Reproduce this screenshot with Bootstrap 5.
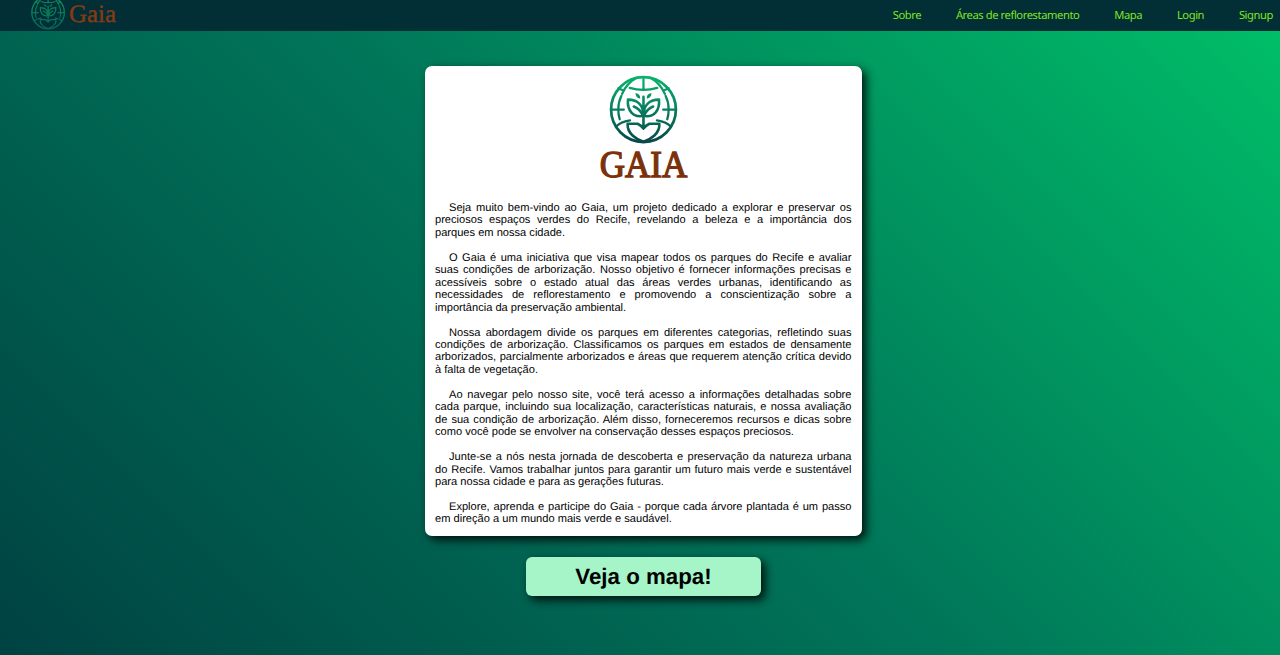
<!DOCTYPE html>
<html lang="pt-br">
<head>
<meta charset="utf-8">
<meta name="viewport" content="width=device-width, initial-scale=1">
<title>Gaia</title>
<link href="https://cdn.jsdelivr.net/npm/bootstrap@5.3.0/dist/css/bootstrap.min.css" rel="stylesheet">
<style>
body{height:100vh;overflow:hidden;background:linear-gradient(45deg,#004242,#007659 50%,#00c068);font-family:"Liberation Sans",Arial,sans-serif;text-rendering:geometricPrecision}
.topbar{height:31px;background:#022f36;padding:0 7px 0 30px}
.topbar .nav-link{font:11.2px/31px "Noto Sans",sans-serif;letter-spacing:-.42px;color:#7fe51f;padding:0}
.topbar .nav{gap:34.8px}
.brand-mark{width:88px;height:31px;display:block}
.about{width:437px;height:470px;margin:35px 0 0 7px;border:0;border-radius:7px;padding:7px 10.5px 0 10px;box-shadow:4px 4px 10px rgba(0,0,0,.85);color:#000}
.about-logo{width:100px;height:116px;display:block;margin:0 auto 13px}
.about p{font-size:11.1px;line-height:12.46px;margin:0 0 12.46px;text-indent:14px;text-align:justify}
.about p:last-child{margin-bottom:0}
.map-btn{width:235.5px;height:39px;margin:21px 0 0 7px;padding:0;border:0;border-radius:6px;background:#a5f5c8;color:#000;font-size:22.3px;font-weight:700;line-height:39px;box-shadow:4px 4px 10px rgba(0,0,0,.85)}
.map-btn:hover{background:#8eeab5}
</style>
</head>
<body>
<svg width="0" height="0" class="position-absolute" aria-hidden="true">
<defs>
<linearGradient id="leafGrad" gradientUnits="userSpaceOnUse" x1="0" y1="50" x2="0" y2="248"><stop offset="0" stop-color="#08b56d"/><stop offset=".5" stop-color="#087d60"/><stop offset="1" stop-color="#084547"/></linearGradient>
<linearGradient id="leafGradDark" gradientUnits="userSpaceOnUse" x1="0" y1="50" x2="0" y2="248"><stop offset="0" stop-color="#07935c"/><stop offset="1" stop-color="#086457"/></linearGradient>
<g id="globe" fill="none" stroke-width="6.5" stroke-linecap="round" stroke-linejoin="round">
<circle cx="160" cy="149" r="94" stroke-width="8"/>
<path d="M160 55V90M87 87Q95 91 103 94M233 87Q225 91 217 94M120 86Q160 98 200 86M138 58Q112 72 98 103M182 58Q208 72 222 103M96 109Q87 127 87 149Q87 164 91 177M224 109Q233 127 233 149Q233 164 229 177M66 149H103M217 149H254M80 199Q92 184 121 180M240 199Q228 184 199 180"/>
<path d="M160 112V204M160 167C130 173 112 151 115 120C142 120 160 135 160 167ZM160 167C190 173 208 151 205 120C178 120 160 135 160 167ZM132 140Q149 147 158 165M188 140Q171 147 162 165M143 190H114C112 218 139 235 160 242C181 235 208 218 206 190H177Q166 195 160 204Q154 195 143 190Z" stroke-width="7.5"/>
<path d="M138 103Q149 105 149 115Q140 114 138 103ZM182 103Q171 105 171 115Q180 114 182 103Z" stroke-width="3" fill="#078f62"/>
</g>
</defs>
</svg>
<header class="topbar d-flex justify-content-between align-items-center">
<a href="#" aria-label="Gaia">
<svg class="brand-mark" viewBox="0 0 88 31">
<use href="#globe" transform="translate(-9.6 -13.2) scale(.173)" stroke="url(#leafGradDark)"/>
<text x="39" y="22" font-family="Liberation Serif,serif" font-size="25" stroke="#843b14" stroke-width=".4" textLength="47" lengthAdjust="spacingAndGlyphs" fill="#843b14">Gaia</text>
</svg></a>
<nav class="nav flex-nowrap">
<a class="nav-link" href="#">Sobre</a>
<a class="nav-link" href="#">Áreas de reflorestamento</a>
<a class="nav-link" href="#">Mapa</a>
<a class="nav-link" href="#">Login</a>
<a class="nav-link" href="#">Signup</a>
</nav>
</header>
<main class="d-flex flex-column align-items-center">
<section class="card about">
<svg class="about-logo flex-shrink-0 overflow-visible" viewBox="13.6 43 290 336" role="img" aria-label="Gaia">
<use href="#globe" stroke="url(#leafGrad)"/>
<text x="33" y="343" font-family="Liberation Serif,serif" font-size="110" stroke="#7b310a" stroke-width="4" textLength="254" lengthAdjust="spacingAndGlyphs" fill="#7b310a">GAIA</text>
</svg>
<p>Seja muito bem-vindo ao Gaia, um projeto dedicado a explorar e preservar os preciosos espaços verdes do Recife, revelando a beleza e a importância dos parques em nossa cidade.</p>
<p>O Gaia é uma iniciativa que visa mapear todos os parques do Recife e avaliar suas condições de arborização. Nosso objetivo é fornecer informações precisas e acessíveis sobre o estado atual das áreas verdes urbanas, identificando as necessidades de reflorestamento e promovendo a conscientização sobre a importância da preservação ambiental.</p>
<p>Nossa abordagem divide os parques em diferentes categorias, refletindo suas condições de arborização. Classificamos os parques em estados de densamente arborizados, parcialmente arborizados e áreas que requerem atenção crítica devido à falta de vegetação.</p>
<p>Ao navegar pelo nosso site, você terá acesso a informações detalhadas sobre cada parque, incluindo sua localização, características naturais, e nossa avaliação de sua condição de arborização. Além disso, forneceremos recursos e dicas sobre como você pode se envolver na conservação desses espaços preciosos.</p>
<p>Junte-se a nós nesta jornada de descoberta e preservação da natureza urbana do Recife. Vamos trabalhar juntos para garantir um futuro mais verde e sustentável para nossa cidade e para as gerações futuras.</p>
<p>Explore, aprenda e participe do Gaia - porque cada árvore plantada é um passo em direção a um mundo mais verde e saudável.</p>
</section>
<a class="btn map-btn" href="#">Veja o mapa!</a>
</main>
<script src="https://cdn.jsdelivr.net/npm/bootstrap@5.3.0/dist/js/bootstrap.bundle.min.js"></script>
</body>
</html>
